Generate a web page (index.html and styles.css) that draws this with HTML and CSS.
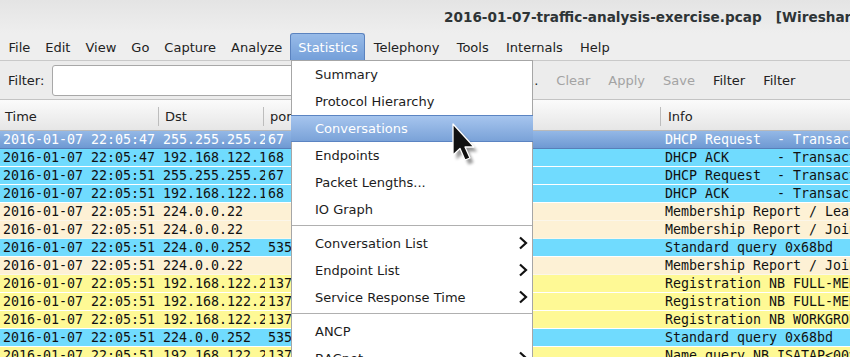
FILE: index.html
```html
<!DOCTYPE html>
<html>
<head>
<meta charset="utf-8">
<link rel="stylesheet" href="styles.css">
</head>
<body>
<div class="win">
  <div class="titlebar"><span class="title">2016-01-07-traffic-analysis-exercise.pcap   [Wireshark 1.12.8 (Git Rev Unknown from unknown)]</span></div>
  <div class="menubar">
    <span class="mi">File</span>
    <span class="mi">Edit</span>
    <span class="mi">View</span>
    <span class="mi">Go</span>
    <span class="mi">Capture</span>
    <span class="mi">Analyze</span>
    <span class="mi active">Statistics</span>
    <span class="mi">Telephony</span>
    <span class="mi">Tools</span>
    <span class="mi">Internals</span>
    <span class="mi">Help</span>
  </div>
  <div class="filterbar">
    <span class="flabel">Filter:</span>
    <div class="finput"></div>
    <span class="fbtn">Expression...</span>
    <span class="fbtn dim">Clear</span>
    <span class="fbtn dim">Apply</span>
    <span class="fbtn dim">Save</span>
    <span class="fbtn">Filter</span>
    <span class="fbtn">Filter</span>
  </div>
  <div class="header">
    <div class="hc">Time</div>
    <div class="hc">Dst</div>
    <div class="hc">port</div>
    <div class="hc last">Info</div>
  </div>
  <div class="rows">
    <div class="row sel"><span>2016-01-07 22:05:47</span><span>255.255.255.255</span><span>67</span><span>DHCP Request  - Transaction ID 0x5d0e2f1c</span></div>
    <div class="row cy"><span>2016-01-07 22:05:47</span><span>192.168.122.168</span><span>68</span><span>DHCP ACK      - Transaction ID 0x5d0e2f1c</span></div>
    <div class="row cy"><span>2016-01-07 22:05:51</span><span>255.255.255.255</span><span>67</span><span>DHCP Request  - Transaction ID 0x1bc0e05a</span></div>
    <div class="row cy"><span>2016-01-07 22:05:51</span><span>192.168.122.168</span><span>68</span><span>DHCP ACK      - Transaction ID 0x1bc0e05a</span></div>
    <div class="row bg"><span>2016-01-07 22:05:51</span><span>224.0.0.22</span><span></span><span>Membership Report / Leave group</span></div>
    <div class="row bg"><span>2016-01-07 22:05:51</span><span>224.0.0.22</span><span></span><span>Membership Report / Join group</span></div>
    <div class="row cy"><span>2016-01-07 22:05:51</span><span>224.0.0.252</span><span>5355</span><span>Standard query 0x68bd</span></div>
    <div class="row bg"><span>2016-01-07 22:05:51</span><span>224.0.0.22</span><span></span><span>Membership Report / Join group</span></div>
    <div class="row yl"><span>2016-01-07 22:05:51</span><span>192.168.122.255</span><span>137</span><span>Registration NB FULL-MERCURY</span></div>
    <div class="row yl"><span>2016-01-07 22:05:51</span><span>192.168.122.255</span><span>137</span><span>Registration NB FULL-MERCURY</span></div>
    <div class="row yl"><span>2016-01-07 22:05:51</span><span>192.168.122.255</span><span>137</span><span>Registration NB WORKGROUP</span></div>
    <div class="row cy"><span>2016-01-07 22:05:51</span><span>224.0.0.252</span><span>5355</span><span>Standard query 0x68bd</span></div>
    <div class="row yl"><span>2016-01-07 22:05:51</span><span>192.168.122.255</span><span>137</span><span>Name query NB ISATAP&lt;00&gt;</span></div>
  </div>

  <div class="menu">
    <div class="item">Summary</div>
    <div class="item">Protocol Hierarchy</div>
    <div class="item hi">Conversations</div>
    <div class="item">Endpoints</div>
    <div class="item">Packet Lengths...</div>
    <div class="item">IO Graph</div>
    <div class="sep"></div>
    <div class="item sub">Conversation List<svg class="chev" viewBox="0 0 10 14"><path d="M2 1.5 L8 7 L2 12.5" fill="none" stroke="#111" stroke-width="2.2"/></svg></div>
    <div class="item sub">Endpoint List<svg class="chev" viewBox="0 0 10 14"><path d="M2 1.5 L8 7 L2 12.5" fill="none" stroke="#111" stroke-width="2.2"/></svg></div>
    <div class="item sub">Service Response Time<svg class="chev" viewBox="0 0 10 14"><path d="M2 1.5 L8 7 L2 12.5" fill="none" stroke="#111" stroke-width="2.2"/></svg></div>
    <div class="sep"></div>
    <div class="item">ANCP</div>
    <div class="item sub">BACnet<svg class="chev" viewBox="0 0 10 14"><path d="M2 1.5 L8 7 L2 12.5" fill="none" stroke="#111" stroke-width="2.2"/></svg></div>
  </div>

  <svg class="cursor" width="30" height="46" viewBox="0 0 30 46">
    <defs><filter id="sh" x="-50%" y="-50%" width="200%" height="200%"><feGaussianBlur stdDeviation="1.8"/></filter></defs>
    <path d="M3 3 L3 34 L10 27.5 L15 39 L20 37 L15 26 L24 26 Z" fill="#000" opacity="0.4" filter="url(#sh)" transform="translate(1.5,2.5)"/>
    <path d="M1 1 L1 32 L8 25.5 L13 37 L18 35 L13 24 L22 24 Z" fill="#111" stroke="#fff" stroke-width="1.3" stroke-linejoin="round"/>
  </svg>
</div>
</body>
</html>
```
FILE: styles.css
```css
* { box-sizing: border-box; }
html, body { margin: 0; padding: 0; }
body {
  width: 850px;
  height: 357px;
  overflow: hidden;
  background: #ededed;
  font-family: "DejaVu Sans", sans-serif;
  font-size: 13px;
  color: #1a1a1a;
}
.win { position: relative; width: 850px; height: 357px; overflow: hidden; }

.titlebar {
  height: 33px;
  background: linear-gradient(#e4e4e4, #eeeeee);
  display: flex;
  align-items: center;
  padding-left: 444px;
  padding-top: 1px;
}
.title {
  font-weight: bold;
  font-size: 13.6px;
  color: #2e3436;
  white-space: pre;
}

.menubar {
  height: 28px;
  display: flex;
  align-items: stretch;
  padding-left: 1px;
  border-bottom: 1px solid #c9c9c9;
  background: #eeeeee;
}
.mi {
  display: flex;
  align-items: center;
  padding: 1px 7.5px 0;
  color: #222;
}
.mi.active {
  background: linear-gradient(#98bbe8, #749fd9);
  border: 1px solid #5b83bf;
  border-bottom: none;
  border-radius: 3px 3px 0 0;
  color: #fff;
  padding: 1px 6.5px 0 7.5px;
}
.active ~ .mi { padding: 1px 8.75px 0 8.5px; }

.filterbar {
  height: 39px;
  display: flex;
  align-items: center;
  border-bottom: 1px solid #c3c3c3;
  background: #ececec;
  padding-left: 8px;
}
.flabel { margin-right: 8px; color: #222; }
.finput {
  width: 395px;
  height: 31px;
  background: #fff;
  border: 1px solid #a8a8a8;
  border-radius: 3px;
  margin-right: 8px;
}
.fbtn { margin-right: 18px; color: #222; white-space: nowrap; }
.fbtn.dim { color: #a3a3a3; }

.header {
  height: 31px;
  display: grid;
  grid-template-columns: 160px 105px 397px 1fr;
  background: linear-gradient(#fbfbfb, #e6e6e6);
  border-bottom: 1px solid #b9b9b9;
}
.hc {
  position: relative;
  display: flex;
  align-items: center;
  padding-left: 5px;
  padding-top: 3px;
  color: #222;
  overflow: hidden;
  white-space: nowrap;
}
.hc::after {
  content: "";
  position: absolute;
  right: 1px;
  top: 7px;
  bottom: 4px;
  width: 1px;
  background: #bdbdbd;
}
.hc.last { padding-left: 6px; }
.hc.last::after { display: none; }

.rows { font-family: "DejaVu Sans Mono", monospace; font-size: 13.3px; }
.row {
  height: 18px;
  display: grid;
  grid-template-columns: 160px 105px 397px 1fr;
  border-bottom: 1px solid #fff;
  color: #111;
}
.row span {
  padding-left: 3px;
  overflow: hidden;
  white-space: pre;
  line-height: 17px;
}
.row.cy { background: #70dbfe; }
.row.bg { background: #fdf1d5; border-bottom-color: #fbf6ea; }
.row.yl { background: #fef995; }
.row.sel {
  background: linear-gradient(#94b8e6, #6e99d3);
  border-bottom: 1px solid #587fb8;
  color: #fff;
}

.menu {
  position: absolute;
  left: 291px;
  top: 60px;
  width: 242px;
  background: #fff;
  border: 1px solid #a6a6a6;
  border-bottom: none;
}
.item {
  height: 27px;
  display: flex;
  align-items: center;
  padding-left: 23px;
  padding-bottom: 1px;
  color: #1c1c1c;
  position: relative;
  white-space: nowrap;
}
.item.hi {
  background: linear-gradient(#a6c5ee, #7aa2d8);
  border-top: 1px solid #5b84c2;
  border-bottom: 1px solid #5b84c2;
  margin: 0 -1px;
  padding-left: 24px;
  color: #fff;
}
.sep {
  height: 7px;
  position: relative;
}
.sep::after {
  content: "";
  position: absolute;
  left: 0;
  right: 0;
  top: 2px;
  height: 1px;
  background: #b0b0b0;
}
.chev {
  position: absolute;
  right: 4px;
  top: 6px;
  width: 10px;
  height: 14px;
}
.cursor {
  position: absolute;
  left: 452px;
  top: 123px;
}
```
